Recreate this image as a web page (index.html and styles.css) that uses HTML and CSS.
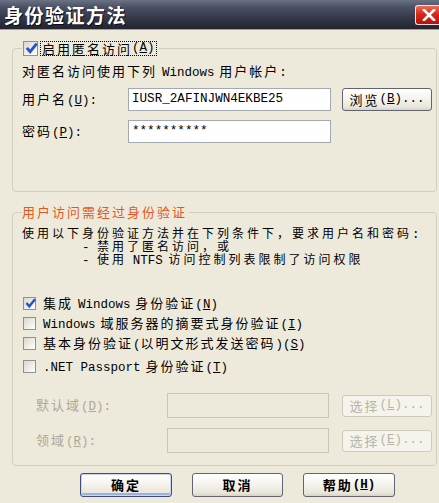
FILE: index.html
```html
<!DOCTYPE html>
<html lang="zh-CN">
<head>
<meta charset="utf-8">
<title>身份验证方法</title>
<link rel="stylesheet" href="styles.css">
</head>
<body>
<div class="window">
  <div class="titlebar">
    <span class="title">身份验证方法</span>
    <span class="close"><svg width="14" height="12" viewBox="0 0 14 12"><path d="M2 1 L12 11 M12 1 L2 11" stroke="#fff" stroke-width="2.6" stroke-linecap="square"/></svg></span>
  </div>
  <div class="content">
    <fieldset class="group g1">
      <legend class="leg-check">
        <span class="cb big checked"><svg width="15" height="15" viewBox="0 0 13 13"><path d="M2.5 6 L5.3 9.3 L11 2.2" fill="none" stroke="#2252cc" stroke-width="2.4"/></svg></span>
        <span class="focus">启用匿名访问<span class="m">(<u>A</u>)</span></span>
      </legend>
      <div class="line">对匿名访问使用下列 <span class="m">Windows</span> 用户帐户<span class="m">:</span></div>
      <div class="row first">
        <span class="label">用户名<span class="m">(<u>U</u>):</span></span>
        <span class="input"><span class="m val">IUSR_2AFINJWN4EKBE25</span></span>
        <span class="btn browse">浏览<span class="m">(<u>B</u>)...</span></span>
      </div>
      <div class="row">
        <span class="label">密码<span class="m">(<u>P</u>):</span></span>
        <span class="input"><span class="m val">**********</span></span>
      </div>
    </fieldset>

    <fieldset class="group g2">
      <legend class="leg-text">用户访问需经过身份验证</legend>
      <div class="desc">
        <div class="dline">使用以下身份验证方法并在下列条件下，要求用户名和密码<span class="m">:</span></div>
        <div class="dline indent"><span class="m">- </span>禁用了匿名访问，或</div>
        <div class="dline indent"><span class="m">- </span>使用 <span class="m">NTFS</span> 访问控制列表限制了访问权限</div>
      </div>
      <div class="cbrow first">
        <span class="cb checked"><svg width="13" height="13" viewBox="0 0 13 13"><path d="M2.5 6 L5.3 9.3 L11 2.2" fill="none" stroke="#2252cc" stroke-width="2.4"/></svg></span>
        <span>集成 <span class="m">Windows</span> 身份验证<span class="m">(<u>N</u>)</span></span>
      </div>
      <div class="cbrow">
        <span class="cb"></span>
        <span><span class="m">Windows</span> 域服务器的摘要式身份验证<span class="m">(<u>I</u>)</span></span>
      </div>
      <div class="cbrow">
        <span class="cb"></span>
        <span>基本身份验证<span class="m">(</span>以明文形式发送密码<span class="m">)(<u>S</u>)</span></span>
      </div>
      <div class="cbrow last">
        <span class="cb"></span>
        <span><span class="m">.NET Passport</span> 身份验证<span class="m">(<u>T</u>)</span></span>
      </div>
      <div class="drow first">
        <span class="dlabel">默认域<span class="m">(<u>D</u>):</span></span>
        <span class="dinput"></span>
        <span class="btn disabled">选择<span class="m">(<u>L</u>)...</span></span>
      </div>
      <div class="drow">
        <span class="dlabel">领域<span class="m">(<u>R</u>):</span></span>
        <span class="dinput"></span>
        <span class="btn disabled">选择<span class="m">(<u>E</u>)...</span></span>
      </div>
    </fieldset>

    <div class="actions">
      <span class="btn act default">确定</span>
      <span class="btn act cancel">取消</span>
      <span class="btn act">帮助<span class="m">(<u>H</u>)</span></span>
    </div>
  </div>
</div>
</body>
</html>
```
FILE: styles.css
```css
html, body {
  margin: 0;
  padding: 0;
}
body {
  width: 439px;
  height: 503px;
  overflow: hidden;
  background: #eeeadb;
  font-family: "Noto Sans CJK SC", "Noto Sans", sans-serif;
  font-size: 13px;
  letter-spacing: 2px;
  line-height: 16px;
  color: #000;
}
.window {
  width: 439px;
  height: 503px;
  overflow: hidden;
}
.titlebar {
  height: 30px;
  box-sizing: border-box;
  display: flex;
  align-items: center;
  justify-content: space-between;
  padding-left: 4px;
  background: linear-gradient(#6c7284 0%, #4b5064 25%, #35394a 60%, #22242f 100%);
  border-bottom: 1px solid #9aa0ac;
  overflow: hidden;
}
.title {
  color: #fff;
  font-weight: bold;
  font-size: 19px;
  letter-spacing: 1.5px;
  line-height: 22px;
  text-shadow: 1px 1px 0 #0c0c14;
}
.close {
  width: 30px;
  height: 20px;
  margin-right: -6px;
  margin-top: 1px;
  box-sizing: border-box;
  border: 1px solid #f4dede;
  border-right: none;
  border-radius: 3px 0 0 3px;
  background: linear-gradient(#ee6d5a 0%, #d8291c 45%, #b4120c 100%);
  display: flex;
  align-items: center;
  justify-content: flex-start;
  padding-left: 6px;
}
.close svg { display: block; }

.m {
  font-family: "Liberation Mono", monospace;
  font-size: 12.5px;
  letter-spacing: 0;
  line-height: 1;
}
u { text-decoration: underline; text-underline-offset: 1px; }

.content {
  padding-top: 10px;
}
.group {
  margin: 0 2px 0 12px;
  border: 1px solid #d2cfbd;
  border-radius: 4px;
  padding: 0 4px 0 9px;
  min-width: 0;
}
.g1 { padding-top: 7px; padding-bottom: 48px; }
.g2 { margin-top: 12px; padding-top: 6px; padding-bottom: 12px; }

.leg-check {
  padding: 0 3px 0 1px;
  display: flex;
  align-items: center;
  height: 16px;
}
.leg-check .cb { margin-right: 3px; }
.focus {
  outline: 1px dotted #000;
  outline-offset: 0;
  padding: 0 1px;
  line-height: 13px;
  height: 13px;
  display: inline-flex;
  align-items: center;
  white-space: pre;
}
.leg-text {
  padding: 0 2px 0 0;
  color: #e2591f;
  height: 16px;
}

.cb {
  width: 13px;
  height: 13px;
  box-sizing: border-box;
  border: 1px solid #8d9196;
  background: linear-gradient(135deg, #d8d8d0 0%, #f0f0ea 60%, #ffffff 100%);
  flex: none;
  position: relative;
  display: inline-block;
}
.cb.big { width: 15px; height: 15px; }
.cb svg {
  position: absolute;
  left: 0;
  top: -1px;
}

.line { height: 16px; white-space: pre; }
.row {
  display: flex;
  align-items: center;
  margin-top: 9px;
}
.label { width: 106px; flex: none; white-space: pre; }
.input {
  width: 203px;
  height: 23px;
  box-sizing: border-box;
  border: 1px solid #a3a9b2;
  background: #fff;
  display: flex;
  align-items: center;
  padding-left: 3px;
  flex: none;
}
.val { font-size: 12.6px; }

.btn {
  box-sizing: border-box;
  display: inline-flex;
  align-items: center;
  justify-content: center;
  border: 1px solid #5f6470;
  border-radius: 3px;
  background: linear-gradient(#ffffff 0%, #f6f5ef 40%, #e9e6da 85%, #d8d3c6 100%);
  flex: none;
  line-height: 16px;
  white-space: pre;
}
.browse {
  width: 90px;
  height: 23px;
  margin-left: 11px;
}

.dline {
  height: 13px;
  line-height: 13px;
  font-size: 12px;
  letter-spacing: 3px;
  white-space: pre;
}
.indent { padding-left: 60px; }

.cbrow {
  height: 20px;
  display: flex;
  align-items: center;
  padding-left: 1px;
  white-space: pre;
}
.cbrow .cb { margin-right: 7px; }
.cbrow.first { margin-top: 28px; }
.cbrow.last { margin-top: 3px; }

.drow {
  display: flex;
  align-items: center;
  margin-top: 10px;
  color: #aca899;
}
.drow.first { margin-top: 17px; }
.dlabel {
  width: 131px;
  padding-left: 14px;
  flex: none;
  white-space: pre;
}
.dinput {
  width: 162px;
  height: 25px;
  box-sizing: border-box;
  border: 1px solid #c9c6b6;
  flex: none;
}
.btn.disabled {
  width: 90px;
  height: 22px;
  margin-left: 13px;
  border-color: #cdcabb;
  background: #f4f3ec;
  color: #b8b5a6;
}

.actions {
  display: flex;
  gap: 20px;
  padding-left: 80px;
  margin-top: 7px;
}
.act {
  width: 92px;
  height: 24px;
  font-weight: bold;
}
.act.cancel { width: 91px; }
.act.default {
  border-color: #3d4e7a;
  box-shadow: inset 0 0 0 1px #c6d6f4, inset 0 -2px 0 1px #98b2e8;
}
```
